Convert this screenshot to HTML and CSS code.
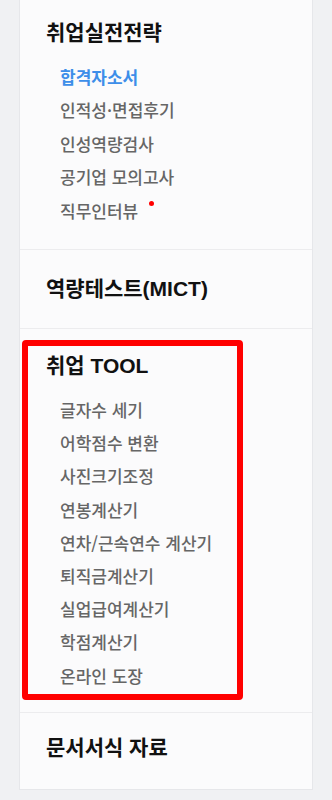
FILE: index.html
```html
<!DOCTYPE html>
<html lang="ko">
<head>
    <meta charset="UTF-8">
    <title>취업 메뉴</title>
    <link rel="stylesheet" href="styles.css">
</head>
<body>
<div class="panel">
    <div class="section first">
        <h2>취업실전전략</h2>
        <ul class="menu">
            <li class="active">합격자소서</li>
            <li>인적성·면접후기</li>
            <li>인성역량검사</li>
            <li>공기업 모의고사</li>
            <li>직무인터뷰<span class="dot"></span></li>
        </ul>
    </div>
    <div class="section single">
        <h2>역량테스트(MICT)</h2>
    </div>
    <div class="section marked">
        <h2>취업 TOOL</h2>
        <ul class="menu tight">
            <li>글자수 세기</li>
            <li>어학점수 변환</li>
            <li>사진크기조정</li>
            <li>연봉계산기</li>
            <li>연차/근속연수 계산기</li>
            <li>퇴직금계산기</li>
            <li>실업급여계산기</li>
            <li>학점계산기</li>
            <li>온라인 도장</li>
        </ul>
    </div>
    <div class="section last">
        <h2>문서서식 자료</h2>
    </div>
</div>
</body>
</html>
```

FILE: styles.css
```css
body {
    margin: 0;
    padding: 0;
    background-color: #f0f1f3;
    font-family: "Noto Sans CJK KR", "Noto Sans", sans-serif;
}

.panel {
    margin: 0 19px;
    height: 790px;
    box-sizing: border-box;
    background-color: #fbfbfc;
    border: 1px solid #e6e7ea;
    border-top: none;
}

.section {
    position: relative;
    padding: 25px 26px 20px;
    border-top: 1px solid #ececee;
}

.section.first {
    padding-top: 21px;
    padding-bottom: 22px;
    border-top: none;
}

.section.single {
    padding: 27px 26px 27px;
}

.section.last {
    padding: 23px 26px 30px;
}

/* red annotation frame */
.section.marked::before {
    content: '';
    position: absolute;
    top: 11px;
    left: 2px;
    width: 221px;
    height: 360px;
    box-sizing: border-box;
    border: 6px solid #ff0000;
    border-radius: 4px;
}

h2 {
    margin: 0;
    font-family: "Liberation Sans", "Noto Sans CJK KR", sans-serif;
    font-size: 21px;
    line-height: 24px;
    font-weight: 700;
    color: #111;
}

.menu {
    list-style: none;
    margin: 15px 0 0;
    padding: 0 0 0 14px;
}

.menu li {
    font-size: 17px;
    line-height: 33.4px;
    font-weight: 500;
    color: #666;
}

.menu.tight li {
    line-height: 33.2px;
}

.menu li.active {
    color: #3d8ee9;
    font-weight: 700;
}

.dot {
    display: inline-block;
    width: 5px;
    height: 5px;
    margin-left: 11px;
    vertical-align: 12px;
    border-radius: 50%;
    background-color: #f00;
}
```
